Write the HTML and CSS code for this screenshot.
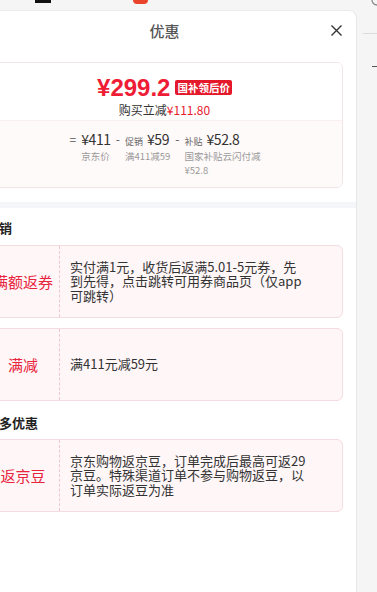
FILE: index.html
```html
<!DOCTYPE html>
<html lang="zh-CN">
<head>
<meta charset="utf-8">
<title>优惠</title>
<link rel="stylesheet" href="styles.css">
</head>
<body>
<div class="page">
  <div class="topbar">
    <span class="tb-black"></span>
    <span class="tb-red"></span>
    <svg class="tb-icon" width="8" height="8" viewBox="0 0 8 8"><circle cx="8" cy="0" r="5" fill="none" stroke="#8a8a8a" stroke-width="1.3"/></svg>
  </div>
  <div class="main">
    <section class="sheet">
      <header class="sheet-head">
        <span></span>
        <h2 class="sheet-title">优惠</h2>
        <button class="close" aria-label="关闭">
          <svg width="11" height="11" viewBox="0 0 11 11"><path d="M0.5 0.5L10.5 10.5M10.5 0.5L0.5 10.5" stroke="#333" stroke-width="1.4" fill="none"/></svg>
        </button>
      </header>

      <div class="price-wrap">
        <div class="price-card">
          <div class="price-top">
            <div class="price-row">
              <span class="price">¥299.2</span>
              <span class="badge">国补领后价</span>
            </div>
            <div class="price-sub">购买立减<span class="red">¥111.80</span></div>
          </div>
          <div class="calc">
            <span class="op">=</span>
            <div class="calc-col">
              <div class="calc-val">¥411</div>
              <div class="calc-lab">京东价</div>
            </div>
            <span class="op">-</span>
            <div class="calc-col">
              <div class="calc-val"><span class="tag">促销</span>¥59</div>
              <div class="calc-lab">满411减59</div>
            </div>
            <span class="op">-</span>
            <div class="calc-col calc-col-wide">
              <div class="calc-val"><span class="tag">补贴</span>¥52.8</div>
              <div class="calc-lab">国家补贴云闪付减¥52.8</div>
            </div>
          </div>
        </div>
      </div>

      <div class="band"></div>

      <div class="promos">
        <h3 class="group-title">促销</h3>
        <div class="promo">
          <div class="promo-label">满额返券</div>
          <div class="promo-text">实付满1元，收货后返满5.01-5元券，先到先得，点击跳转可用券商品页（仅app可跳转）</div>
        </div>
        <div class="promo">
          <div class="promo-label">满减</div>
          <div class="promo-text">满411元减59元</div>
        </div>

        <h3 class="group-title group-title-more">更多优惠</h3>
        <div class="promo">
          <div class="promo-label">返京豆</div>
          <div class="promo-text">京东购物返京豆，订单完成后最高可返29京豆。特殊渠道订单不参与购物返豆，以订单实际返豆为准</div>
        </div>
      </div>
    </section>
    <aside class="behind">
      <span class="behind-line"></span>
      <span class="behind-dash"></span>
    </aside>
  </div>
</div>
</body>
</html>
```

FILE: styles.css
```css
* { box-sizing: border-box; }

html, body {
  margin: 0;
  padding: 0;
  height: 100%;
}

body {
  background: #f5f5f5;
  font-family: "Noto Sans CJK SC", "Noto Sans", sans-serif;
  color: #333;
  overflow: hidden;
}

.page {
  height: 100vh;
  display: flex;
  flex-direction: column;
}

/* strip of the page behind the sheet */
.topbar {
  height: 10px;
  flex-shrink: 0;
  display: flex;
  align-items: flex-start;
}

.tb-black {
  width: 16px;
  height: 3px;
  margin-left: 35px;
  background: #111;
}

.tb-red {
  width: 15px;
  height: 4px;
  margin-left: 82px;
  background: #e9452d;
  border-radius: 0 0 6px 6px;
}

.tb-icon {
  margin-left: auto;
  display: block;
}

.main {
  flex: 1;
  display: flex;
  min-height: 0;
}

/* sheet */
.sheet {
  width: 384px;
  margin-left: -27px;
  flex-shrink: 0;
  background: #fff;
  border-radius: 8px 8px 0 0;
  border-top: 1px solid #ececec;
  border-right: 1px solid #e8e8e8;
}

.sheet-head {
  height: 39px;
  display: grid;
  grid-template-columns: 1fr auto 1fr;
  align-items: center;
  padding: 0 14px;
}

.sheet-title {
  margin: 0;
  font-size: 15px;
  font-weight: 500;
  color: #555;
  line-height: 20px;
}

.close {
  justify-self: end;
  width: 11px;
  height: 11px;
  padding: 0;
  border: 0;
  background: none;
  display: flex;
}

.price-wrap {
  padding: 12px 13px 14px;
}

.price-card {
  border: 1px solid #f3e4e7;
  border-radius: 6px;
  overflow: hidden;
}

.price-top {
  padding: 11px 0 3px;
  background: #fff;
  text-align: center;
}

.price-row {
  height: 27px;
  display: flex;
  justify-content: center;
  align-items: center;
  gap: 5px;
}

.price {
  font-family: "Liberation Sans", "Noto Sans CJK SC", sans-serif;
  font-weight: 700;
  font-size: 24px;
  line-height: 27px;
  color: #ee1d35;
}

.badge {
  background: #e4172b;
  color: #fff;
  font-size: 10.5px;
  font-weight: 700;
  line-height: 15px;
  padding: 0 2px;
  border-radius: 2px;
}

.price-sub {
  margin-top: 2px;
  font-size: 12px;
  line-height: 14px;
  color: #333;
}

.red { color: #e8192c; }

.calc {
  background: #fffafa;
  border-top: 1px solid #fbf0f1;
  padding: 8px 0 10px;
  display: flex;
  justify-content: center;
  align-items: flex-start;
}

.op {
  font-size: 12px;
  line-height: 20px;
  height: 20px;
  color: #555;
  padding: 0 5px;
}

.calc-col {
  display: flex;
  flex-direction: column;
}

.calc-col-wide { max-width: 80px; }

.calc-val {
  height: 20px;
  font-size: 14px;
  line-height: 20px;
  letter-spacing: -0.4px;
  color: #333;
  white-space: nowrap;
}

.tag {
  font-size: 9px;
  line-height: 14px;
  letter-spacing: 0;
  color: #666;
  margin-right: 4px;
}

.calc-lab {
  font-size: 9.5px;
  line-height: 14px;
  color: #999;
}

.band {
  height: 6px;
  background: #f4f6fa;
}

/* promotions */
.promos {
  padding: 10px 13px 0;
}

.group-title {
  margin: 0 0 7px;
  font-size: 13px;
  font-weight: 700;
  line-height: 20px;
  color: #222;
}

.group-title-more {
  margin-top: 12px;
  margin-bottom: 6px;
}

.promo {
  min-height: 73px;
  display: flex;
  background: #fff6f8;
  border: 1px solid #f5dce2;
  border-radius: 6px;
  margin-bottom: 10px;
}

.promo-label {
  width: 73px;
  flex-shrink: 0;
  display: flex;
  align-items: center;
  justify-content: center;
  font-size: 15px;
  color: #e8243c;
  white-space: nowrap;
  border-right: 1px dashed #f0c6cf;
}

.promo-text {
  width: 247px;
  padding-left: 10px;
  display: flex;
  align-items: center;
  font-size: 13px;
  line-height: 14.5px;
  color: #333;
}

/* the page behind, to the right of the sheet */
.behind {
  flex: 1;
  display: flex;
  flex-direction: column;
  align-items: flex-end;
}

.behind-line {
  width: 14px;
  height: 1px;
  margin-top: 23px;
  background: #dcdcdc;
}

.behind-dash {
  width: 5px;
  height: 1px;
  margin-top: 32px;
  background: #555;
}
```
